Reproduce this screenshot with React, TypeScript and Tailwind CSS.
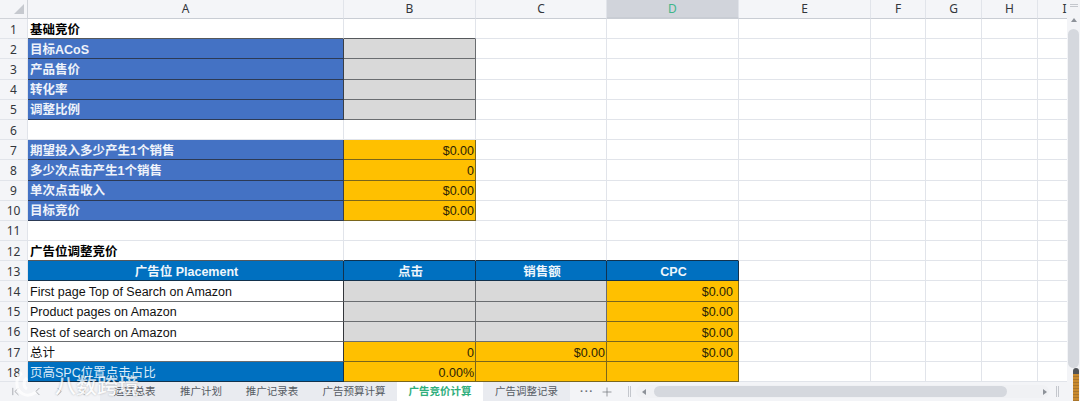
import React from "react";
import { ChevronFirst, ChevronLast, ChevronLeft, ChevronRight, Plus } from "lucide-react";

const FONT = "font-['Liberation_Sans','Noto_Sans_CJK_SC',sans-serif]";

const colHeads = [
  { name: "A", cls: "" },
  { name: "B", cls: "" },
  { name: "C", cls: "" },
  { name: "D", cls: "bg-[#d1d4db] text-[#3fb68b] border-b-2 border-b-[#5cc09c]" },
  { name: "E", cls: "" },
  { name: "F", cls: "" },
  { name: "G", cls: "" },
  { name: "H", cls: "" },
  { name: "I", cls: "" },
];

const plain = "bg-white border-r-[#e1e4ea] border-b-[#e1e4ea]";
const title = "bg-white border-r-[#e1e4ea] border-b-[#55585c] font-bold text-black";
const blue = "bg-[#4472c4] border-r-[#3b3f46] border-b-[#2c3a55] font-bold text-[#eef2fa]";
const gray = "bg-[#d9d9d9] border-r-[#6a6d70] border-b-[#6a6d70]";
const amber = "bg-[#ffc000] border-r-[#7a661c] border-b-[#7a661c] justify-end pr-px text-[#2b2305]";
const amberD = "bg-[#ffc000] border-r-[#7a661c] border-b-[#7a661c] justify-end pr-[5px] text-[#2b2305]";
const head = "bg-[#0070c0] border-r-[#12324d] border-b-[#12324d] font-bold justify-center text-[#eef6fc]";
const white = "bg-white border-r-[#33363a] border-b-[#6a6d70] text-[#111]";
const hi = "bg-[#0070c0] border-r-[#12324d] border-b-[#12324d] text-[#dcecf8]";

type Cell = { t?: string; c?: string };
const rows: Cell[][] = [
  [{ t: "基础竞价", c: title }, { c: "bg-white border-r-[#e1e4ea] border-b-[#55585c]" }],
  [{ t: "目标ACoS", c: blue }, { c: gray }],
  [{ t: "产品售价", c: blue }, { c: gray }],
  [{ t: "转化率", c: blue }, { c: gray }],
  [{ t: "调整比例", c: blue }, { c: gray }],
  [{}, {}],
  [{ t: "期望投入多少产生1个销售", c: blue }, { t: "$0.00", c: amber }],
  [{ t: "多少次点击产生1个销售", c: blue }, { t: "0", c: amber }],
  [{ t: "单次点击收入", c: blue }, { t: "$0.00", c: amber }],
  [{ t: "目标竞价", c: blue }, { t: "$0.00", c: amber }],
  [{}, {}],
  [{ t: "广告位调整竞价", c: title }, { c: "bg-white border-r-[#e1e4ea] border-b-[#12324d]" }, { c: "bg-white border-r-[#e1e4ea] border-b-[#12324d]" }, { c: "bg-white border-r-[#e1e4ea] border-b-[#12324d]" }],
  [{ t: "广告位 Placement", c: head }, { t: "点击", c: head }, { t: "销售额", c: head }, { t: "CPC", c: head }],
  [{ t: "First page Top of Search on Amazon", c: white }, { c: gray }, { c: gray }, { t: "$0.00", c: amberD }],
  [{ t: "Product pages on Amazon", c: white }, { c: gray }, { c: gray }, { t: "$0.00", c: amberD }],
  [{ t: "Rest of search on Amazon", c: white }, { c: gray }, { c: gray }, { t: "$0.00", c: amberD }],
  [{ t: "总计", c: white }, { t: "0", c: amber }, { t: "$0.00", c: amber }, { t: "$0.00", c: amberD }],
  [{ t: "页高SPC位置点击占比", c: hi }, { t: "0.00%", c: amber }, { c: amber }, { c: amber }],
];

function Triangle({ dir }: { dir: "up" | "left" | "right" }) {
  const pts = dir === "up" ? "0,5 3,1 6,5" : dir === "left" ? "5,0 1,3 5,6" : "1,0 5,3 1,6";
  return (
    <svg width="6" height="6" viewBox="0 0 6 6" className="shrink-0">
      <polygon points={pts} fill="#8d9299" />
    </svg>
  );
}

function Tab({ label, w, active, shade }: { label: string; w: string; active?: boolean; shade?: boolean }) {
  return (
    <div
      className={`flex h-full items-center justify-center ${w} ${
        active ? "bg-white font-bold text-[#2fae7c]" : shade ? "bg-[#e9ebf0] text-[#555a62]" : "text-[#555a62]"
      }`}
    >
      {label}
    </div>
  );
}

export default function App() {
  return (
    <div className={`relative flex h-[401px] w-[1080px] overflow-hidden bg-white text-[12.5px] ${FONT}`}>
      <div className="flex w-[1067px] flex-col">
        {/* sheet */}
        <div className="grid h-[382px] grid-cols-[28px_316px_132px_131px_132px_132px_55px_56px_56px_54px] grid-rows-[19px] auto-rows-[20.2px] overflow-hidden">
          <div className="relative border-r border-b border-[#d0d3d9] bg-[#f4f5f8]">
            <svg width="10" height="10" viewBox="0 0 10 10" className="absolute top-[4px] left-[14px]">
              <polygon points="10,0 10,10 0,10" fill="#c6c9cf" />
            </svg>
          </div>
          {colHeads.map((h) => (
            <div
              key={h.name}
              className={`flex items-center justify-center border-r border-b border-r-[#e1e4ea] border-b-[#c9cdd4] font-['Noto_Sans',sans-serif] text-[12px] ${
                h.cls || "bg-[#f4f5f8] text-[#33363b]"
              }`}
            >
              {h.name}
            </div>
          ))}
          {rows.map((row, r) => (
            <React.Fragment key={r}>
              <div className="flex items-center justify-center border-r border-b border-r-[#e1e4ea] border-b-[#e1e4ea] bg-[#f4f5f8] pt-[2px] font-['Noto_Sans',sans-serif] text-[12px] text-[#33363b]">
                {r + 1}
              </div>
              {Array.from({ length: 9 }).map((_, i) => {
                const cell = row[i];
                return (
                  <div
                    key={i}
                    className={`flex items-center overflow-hidden border-r border-b pt-[3px] pl-[2px] whitespace-nowrap ${
                      cell?.c || plain
                    }`}
                  >
                    {cell?.t}
                  </div>
                );
              })}
            </React.Fragment>
          ))}
        </div>

        {/* sheet tabs */}
        <div className="flex h-[19px] items-center bg-[#e9ebf0] text-[10.5px]">
          <div className="flex h-full w-[100px] items-center bg-[#f3f4f7] text-[#6d7177]">
            <ChevronFirst size={13} strokeWidth={1} className="ml-[9px]" />
            <ChevronLeft size={13} strokeWidth={1} className="ml-[9px]" />
            <ChevronRight size={13} strokeWidth={1} className="ml-[9px]" />
            <ChevronLast size={13} strokeWidth={1} className="ml-[9px]" />
          </div>
          <Tab label="运营总表" w="w-[69px]" />
          <Tab label="推广计划" w="w-[64px]" />
          <Tab label="推广记录表" w="w-[78px]" />
          <Tab label="广告预算计算" w="w-[86px]" />
          <Tab label="广告竞价计算" w="w-[86px]" active />
          <Tab label="广告调整记录" w="w-[87px]" shade />
          <div className="flex h-full flex-1 items-center bg-[#f3f4f7] text-[#6d7177]">
            <span className="ml-[10px] text-[11px] leading-none font-bold tracking-[1px]">···</span>
            <Plus size={14} strokeWidth={1.2} className="ml-[6px]" />
            <span className="ml-[14px] h-[11px] w-[3px] shrink-0 border-x border-[#c4c7cd]" />
            <span className="ml-[5px] flex h-[13px] w-[413px] shrink-0 items-center rounded-full bg-[#f0f1f4]">
              <span className="ml-[5px]"><Triangle dir="left" /></span>
              <span className="ml-[7px] h-[11px] w-[353px] rounded-full bg-[#d5d8de]" />
              <span className="ml-[35px]"><Triangle dir="right" /></span>
            </span>
            <span className="ml-[7px] h-[11px] w-[3px] shrink-0 border-x border-[#c4c7cd]" />
          </div>
        </div>
      </div>

      {/* vertical scrollbar */}
      <div className="flex w-[13px] flex-col items-center bg-[#f3f4f7]">
        <span className="mt-[4px] h-[3px] w-[8px] border-y border-[#c4c7cd]" />
        <span className="mt-[10px]"><Triangle dir="up" /></span>
        <span className="mt-[6px] h-[339px] w-[11px] rounded-full bg-[#d5d8de]" />
        <span className="ml-[5px] w-[6px] flex-1 rounded-t-full border-t-[6px] border-[#4f5358] bg-[repeating-linear-gradient(180deg,#c98a2e_0px,#c98a2e_2px,#a9752c_2px,#a9752c_3px)]" />
      </div>

      {/* watermark */}
      <div className="absolute top-[370px] left-[14px] flex items-center text-white opacity-75 [text-shadow:0_0_2px_rgba(0,0,0,0.35)]">
        <svg width="24" height="28" viewBox="0 0 24 28" fill="none" stroke="currentColor" strokeWidth="3">
          <path d="M8 3 C1 8 1 20 9 24 C13 26 18 25 22 22" />
          <path d="M13 8 C9 11 9 17 13 19" />
        </svg>
        <span className="ml-[17px] font-['Noto_Sans_CJK_SC',sans-serif] text-[21px] leading-none font-medium">八数跨境</span>
      </div>
    </div>
  );
}
